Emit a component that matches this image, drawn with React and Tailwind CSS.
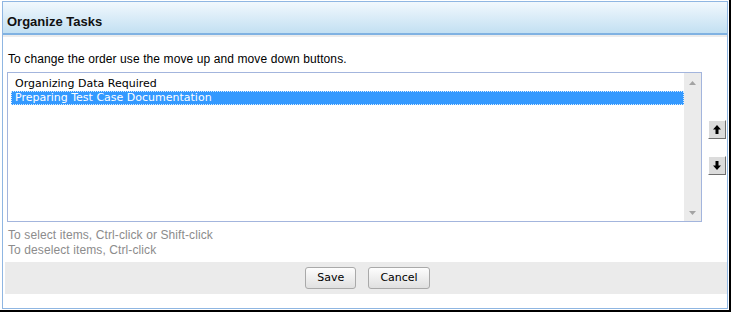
const arial = { fontFamily: '"Liberation Sans", Arial, sans-serif' };
const verdana = { fontFamily: '"DejaVu Sans", Verdana, sans-serif' };

function MoveButton({ down }) {
  return (
    <button className="w-[18px] h-[19px] shrink-0 flex items-center justify-center bg-[#dcdcdc] border border-t-white border-l-white border-r-[#6f6f6f] border-b-[#6f6f6f]">
      <svg width="8" height="9" viewBox="0 0 8 9" className={`shrink-0 ${down ? "rotate-180" : ""}`}>
        <path d="M4 0 L8 4.5 H5.5 V9 H2.5 V4.5 H0 Z" fill="#000" />
      </svg>
    </button>
  );
}

function Tri({ down }) {
  return (
    <svg width="7" height="4" viewBox="0 0 7 4" className={`shrink-0 ${down ? "rotate-180" : ""}`}>
      <path d="M3.5 0 L7 4 H0 Z" fill="#a3a3a3" />
    </svg>
  );
}

export default function App() {
  const items = ["Organizing Data Required", "Preparing Test Case Documentation"];

  return (
    <div className="w-[732px] h-[313px] bg-white">
      <div className="w-[731px] h-[312px] border-r-2 border-b-2 border-black pl-[2px] pt-[1px]">
        <div className="w-[726px] h-[308px] border border-[#8fb6e2] flex flex-col">
          {/* Header */}
          <div className="h-[33px] shrink-0 border-b-2 border-[#80b2e2] bg-linear-to-b from-[#f1f8fd] to-[#c3e0f2] pt-[12px] pl-[4px]">
            <div className="text-[13px] leading-[15px] font-bold text-[#111]" style={arial}>
              Organize Tasks
            </div>
          </div>
          <div className="h-[2px] shrink-0 bg-[#ececec]" />

          {/* Body */}
          <div className="mt-[15px] pl-[5px] text-[12px] leading-[15px] tracking-[0.1px] text-black" style={arial}>
            To change the order use the move up and move down buttons.
          </div>

          <div className="mt-[5px] pl-[4px] flex">
            <div className="w-[695px] h-[150px] shrink-0 border border-[#a3b5dd] flex bg-white">
              <div className="flex-1 pl-[3px] pt-[4px]">
                {items.map((item, i) => (
                  <div
                    key={item}
                    className={`h-[14px] pl-[3px] text-[11px] leading-[12px] border ${
                      i === 1
                        ? "bg-[#3399ff] text-white border-dotted border-[#d6ebff]"
                        : "text-black border-transparent"
                    }`}
                    style={verdana}
                  >
                    {item}
                  </div>
                ))}
              </div>
              <div className="w-[17px] bg-[#ebebeb] flex flex-col items-center justify-between pt-[8px] pb-[6px]">
                <Tri />
                <Tri down />
              </div>
            </div>
            <div className="ml-[6px] flex flex-col justify-center gap-[17px]">
              <MoveButton />
              <MoveButton down />
            </div>
          </div>

          <div className="mt-[6px] pl-[5px] text-[12px] leading-[15px] tracking-[0.1px] text-[#8c8c8c]" style={arial}>
            <div>To select items, Ctrl-click or Shift-click</div>
            <div>To deselect items, Ctrl-click</div>
          </div>

          {/* Footer */}
          <div className="mt-[4px] ml-[2px] h-[32px] bg-[#ebebeb] flex items-center justify-center gap-[12px] pl-[3px]">
            {["Save", "Cancel"].map((label) => (
              <button
                key={label}
                className="h-[22px] px-[11px] rounded-[3px] border border-[#a9a9a9] bg-linear-to-b from-[#fdfdfd] to-[#e0e0e0] text-[11px] text-black"
                style={verdana}
              >
                {label}
              </button>
            ))}
          </div>
        </div>
      </div>
    </div>
  );
}
